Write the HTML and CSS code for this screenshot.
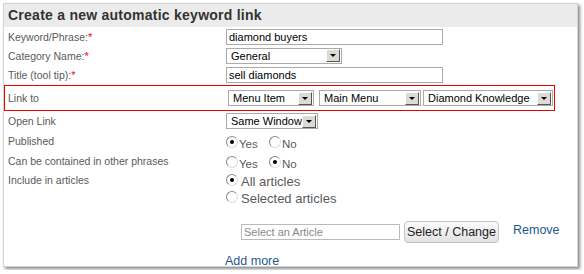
FILE: index.html
```html
<!DOCTYPE html>
<html lang="en">
<head>
	<meta charset="UTF-8">
	<link rel="stylesheet" href="styles.css">
	<title>Keyword link</title>
</head>
<body>
<div class="panel">
	<div class="head">Create a new automatic keyword link</div>
	<div class="row">
		<span class="lbl">Keyword/Phrase:<b>*</b></span>
		<span class="txt wide">diamond buyers</span>
	</div>
	<div class="row">
		<span class="lbl">Category Name:<b>*</b></span>
		<span class="sel cat"><i>General</i><em></em></span>
	</div>
	<div class="row r3">
		<span class="lbl">Title (tool tip):<b>*</b></span>
		<span class="txt wide">sell diamonds</span>
	</div>
	<div class="row linkto">
		<span class="lbl">Link to</span>
		<span class="sels">
			<span class="sel s1"><i>Menu Item</i><em></em></span>
			<span class="sel s2"><i>Main Menu</i><em></em></span>
			<span class="sel s3"><i>Diamond Knowledge</i><em></em></span>
		</span>
	</div>
	<div class="row tall">
		<span class="lbl">Open Link</span>
		<span class="sel win"><i>Same Window</i><em></em></span>
	</div>
	<div class="row tall">
		<span class="lbl">Published</span>
		<span class="radios"><span class="rd on"></span>Yes <span class="rd"></span>No</span>
	</div>
	<div class="row tall">
		<span class="lbl">Can be contained in other phrases</span>
		<span class="radios"><span class="rd"></span>Yes <span class="rd on"></span>No</span>
	</div>
	<div class="row inc">
		<span class="lbl">Include in articles</span>
		<div class="opts">
			<div class="opt"><span class="rd on"></span>All articles</div>
			<div class="opt"><span class="rd"></span>Selected articles</div>
		</div>
	</div>
	<div class="pick">
		<span class="txt art">Select an Article</span>
		<span class="btn">Select / Change</span>
		<a class="lnk rm" href="#">Remove</a>
	</div>
	<a class="lnk more" href="#">Add more</a>
</div>
</body>
</html>
```

FILE: styles.css
```css
body{
	margin: 0;
	padding: 3px;
	background: #fff;
	font-family: "Liberation Sans", Arial, sans-serif;
}
.panel{
	width: 573px;
	height: 262px;
	border: 1px solid #d4d4d4;
	background: #fff;
	box-shadow: 2px 2px 3px #8a8a8a;
	overflow: hidden;
}
.head{
	height: 23px;
	line-height: 23px;
	padding-left: 4px;
	background: #ebebeb;
	color: #333;
	font-weight: bold;
	font-size: 14px;
	letter-spacing: 0.25px;
}
.row{
	display: flex;
	align-items: center;
	height: 19px;
	padding-left: 4px;
	font-size: 10.5px;
	color: #5a5a5a;
}
.row:first-of-type{
	margin-top: 1px;
}
.r3{
	height: 20px;
}
.tall{
	height: 20px;
}
.lbl{
	width: 218px;
	flex: none;
}
.lbl b{
	color: #e00;
	font-weight: normal;
	font-size: 11px;
}
.txt{
	display: block;
	box-sizing: border-box;
	height: 16px;
	line-height: 14px;
	padding-left: 2px;
	border: 1px solid #aaa;
	color: #000;
	font-size: 11px;
	background: #fff;
}
.wide{
	width: 217px;
}
.sel{
	display: flex;
	align-items: center;
	box-sizing: border-box;
	height: 16px;
	border: 1px solid #aaa;
	color: #000;
	font-size: 11px;
	background: #fff;
}
.sel i{
	flex: 1;
	font-style: normal;
	padding-left: 4px;
	white-space: nowrap;
}
.sel em{
	position: relative;
	width: 14px;
	height: 13px;
	margin-right: 1px;
	background: #dcdad5;
	border: 1px solid;
	border-color: #fff #555 #555 #fff;
	box-sizing: border-box;
}
.sel em:after{
	content: "";
	position: absolute;
	left: 3px;
	top: 4px;
	border-left: 3px solid transparent;
	border-right: 3px solid transparent;
	border-top: 3px solid #000;
}
.cat{
	width: 116px;
}
.win{
	width: 92px;
}
.linkto{
	height: 24px;
	width: 546px;
	padding-left: 3px;
	border: 1px solid #e00;
}
.sels{
	display: flex;
	margin-left: 2px;
}
.s1{
	width: 86px;
}
.s2{
	width: 102px;
	margin-left: 5px;
}
.s3{
	width: 130px;
	margin-left: 2px;
}
.rd{
	display: inline-block;
	position: relative;
	box-sizing: border-box;
	width: 12px;
	height: 12px;
	border-radius: 50%;
	border: 1px solid;
	border-color: #888 #ddd #ddd #888;
	background: #fff;
	vertical-align: 0;
	margin-right: 1px;
}
.rd.on:after{
	content: "";
	position: absolute;
	left: 3px;
	top: 3px;
	width: 4px;
	height: 4px;
	border-radius: 50%;
	background: #000;
}
.radios{
	font-size: 11.5px;
	color: #5a5a5a;
	word-spacing: 8px;
	padding-top: 3px;
}
.inc{
	align-items: flex-start;
	height: auto;
	padding-top: 2px;
}
.inc .lbl{
	padding-top: 1px;
}
.opts{
	font-size: 13px;
	color: #5a5a5a;
}
.opt{
	height: 17px;
	line-height: 17px;
}
.opt .rd{
	margin-right: 3px;
}
.pick{
	display: flex;
	align-items: center;
	margin: 14px 0 0 237px;
}
.art{
	width: 159px;
	height: 16px;
	color: #888;
	font-size: 11px;
	border-color: #bbb;
}
.btn{
	margin-left: 4px;
	width: 95px;
	height: 22px;
	line-height: 20px;
	box-sizing: border-box;
	text-align: center;
	border: 1px solid #c2c2c2;
	border-radius: 4px;
	background: linear-gradient(#fbfbfb, #e2e2e2);
	font-size: 12.5px;
	color: #222;
}
.lnk{
	color: #1c5a8c;
	text-decoration: none;
	font-size: 12.5px;
}
.rm{
	margin: -4px 0 0 14px;
}
.more{
	display: block;
	line-height: 14px;
	margin: 11px 0 0 221px;
}
```
